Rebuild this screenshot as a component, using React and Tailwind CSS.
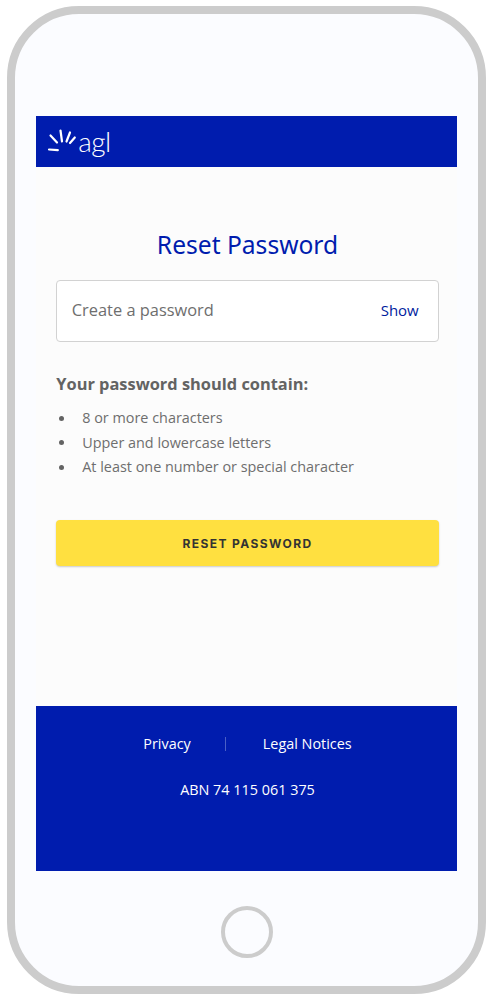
export default function App() {
  const items = ["8 or more characters", "Upper and lowercase letters", "At least one number or special character"];
  return (
    <div className="h-[999px] w-[494px] overflow-hidden bg-white pl-[7px] pt-[6px] font-['Open_Sans',sans-serif]">
      <div className="box-border flex h-[988px] w-[479px] flex-col items-center rounded-[72px] border-8 border-[#cccccc] bg-[#fbfcff] pt-[102px]">
        <div className="flex h-[755px] w-[420.5px] flex-col">
          <header className="flex h-[51px] items-center bg-[#001cae] pl-[12px]">
            <svg width="32" height="26" viewBox="0 0 32 26" fill="none" stroke="white" strokeWidth="2.2" strokeLinecap="round">
              <path d="M2.5 6.5 L9 13.5" />
              <path d="M12.5 1.5 L14 12.5" />
              <path d="M22 3.5 L18.5 12.5" />
              <path d="M26.8 8.5 L22 14" />
              <path d="M1 20.5 L9.8 21.2" />
            </svg>
            <span className="ml-[-2px] mt-[-1px] font-['Lato',sans-serif] text-[28px] font-light leading-none tracking-[-0.5px] text-white">agl</span>
          </header>
          <main className="flex h-[539px] flex-col bg-[#fcfcfc] pl-[20px] pr-[18px]">
            <h1 className="mt-[60px] text-center font-['Noto_Sans',sans-serif] text-[24.6px] font-normal leading-[36px] text-[#001cae]">Reset Password</h1>
            <div className="mt-[17px] flex h-[62px] items-center justify-between rounded-[4px] border-[1.5px] border-[#d2d2d2] bg-white pb-[2px] pl-[14.5px] pr-[19px]">
              <span className="text-[16.4px] text-[#6e6e6e]">Create a password</span>
              <span className="text-[15px] text-[#001c9e]">Show</span>
            </div>
            <h2 className="mt-[30px] text-[16.4px] font-bold leading-[24px] text-[#636363]">Your password should contain:</h2>
            <ul className="mt-[10px] flex flex-col text-[14.4px] leading-[24.5px] text-[#6e6e6e]">
              {items.map((t) => (
                <li key={t} className="flex items-center">
                  <span className="ml-[3px] h-[5px] w-[5px] rounded-full bg-[#636363]" />
                  <span className="ml-[18px]">{t}</span>
                </li>
              ))}
            </ul>
            <button className="mt-[40.5px] flex h-[46px] items-center justify-center rounded-[4px] bg-[#ffe040] pt-[2px] font-['Inter',sans-serif] text-[12px] font-bold tracking-[1.4px] text-[#333333] shadow-[0_1px_2px_rgba(0,0,0,0.2)]">RESET PASSWORD</button>
          </main>
          <footer className="flex h-[165px] flex-col items-center bg-[#001cae] text-[14.4px] text-white">
            <div className="mt-[27px] flex h-[22px] items-center pl-[2px]">
              <span>Privacy</span>
              <span className="ml-[34px] h-[14px] w-px bg-[#4a5fc6]" />
              <span className="ml-[37px]">Legal Notices</span>
            </div>
            <div className="mt-[24px] pl-[2px] leading-[22px]">ABN 74 115 061 375</div>
          </footer>
        </div>
        <div className="mt-[35px] h-[52px] w-[52px] rounded-full border-[4px] border-[#cccccc]" />
      </div>
    </div>
  );
}
